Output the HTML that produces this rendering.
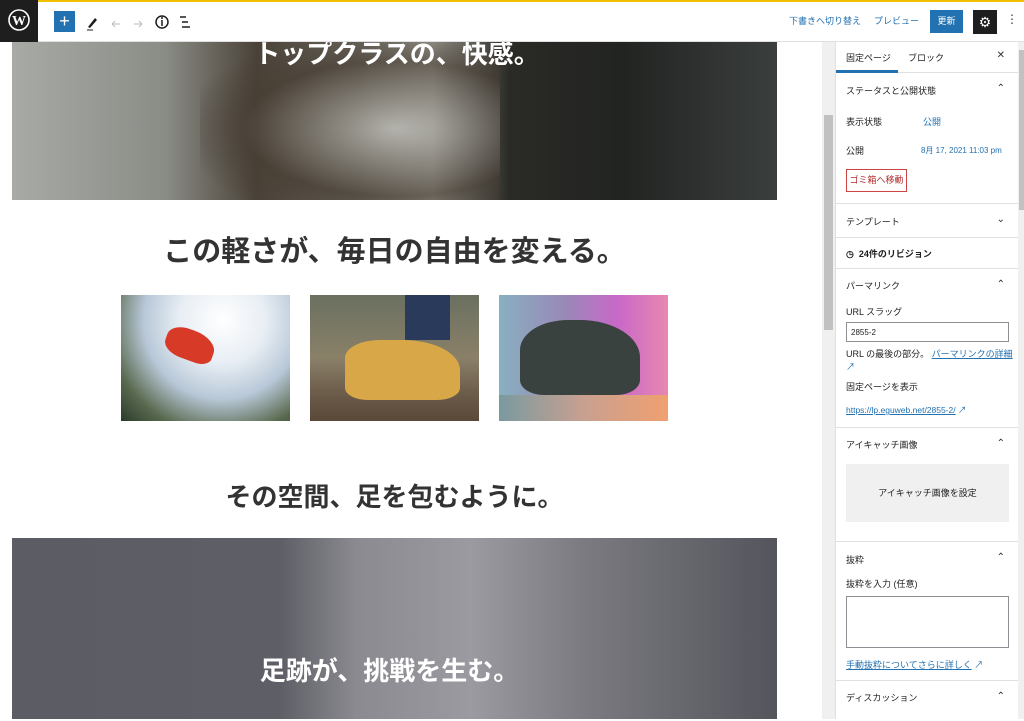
<!DOCTYPE html>
<html><head><meta charset="utf-8"><style>
*{box-sizing:border-box;margin:0;padding:0}
body{width:1024px;height:719px;overflow:hidden;background:#fff;font-family:"Liberation Sans","Noto Sans CJK JP",sans-serif;position:relative;color:#1e1e1e}
.abs{position:absolute}
.top{left:0;top:0;width:1024px;height:42px;background:#fff;border-top:2px solid #f0c000;border-bottom:1px solid #e0e0e0}
.wp{left:0;top:0;width:38px;height:42px;background:#1e1e1e}
.h{font-weight:bold;text-align:center;font-size:28px;color:#333}
.side{left:835px;top:42px;width:183px;height:677px;background:#fff;border-left:1px solid #e0e0e0;font-size:9px}
.sec{border-bottom:1px solid #e0e0e0;position:absolute;left:0;width:183px}
.t{position:absolute;left:10px}
.chev{position:absolute;right:14px;font-size:10px;color:#333}
a,.lnk{color:#2271b1}
</style></head><body>
<div class="abs" style="left:12px;top:42px;width:765px;height:158px;background:linear-gradient(90deg,#a8aaa6 0%,#8a8c86 20%,#4a4238 32%,#6a665c 45%,#9a9890 55%,#2a2a26 65%,#222422 80%,#3a3e3c 100%)"></div>
<div class="abs" style="left:200px;top:42px;width:300px;height:158px;background:radial-gradient(ellipse at 65% 55%,rgba(200,200,195,.7),rgba(70,60,50,.6) 55%,transparent 80%)"></div>
<div class="abs h" style="left:12px;top:34px;width:770px;color:#fff;font-size:26px">トップクラスの、快感。</div>
<div class="abs h" style="left:12px;top:228px;width:765px;font-size:29px">この軽さが、毎日の自由を変える。</div>
<div class="abs" style="left:121px;top:295px;width:169px;height:126px;background:radial-gradient(circle at 60% 20%,#fff,#e8eef4 30%,#b8c8d8 55%,#5a6a50 80%,#2a3a2a)"></div>
<div class="abs" style="left:165px;top:330px;width:50px;height:30px;background:#d83a28;border-radius:40% 50% 30% 40%;transform:rotate(20deg)"></div>
<div class="abs" style="left:310px;top:295px;width:169px;height:126px;background:linear-gradient(180deg,#6a7060 0%,#8a8068 50%,#6a5a48 80%,#5a4838)"></div>
<div class="abs" style="left:345px;top:340px;width:115px;height:60px;background:#d8a848;border-radius:30% 50% 20% 20%"></div>
<div class="abs" style="left:405px;top:295px;width:45px;height:45px;background:#2a3a5a"></div>
<div class="abs" style="left:499px;top:295px;width:169px;height:126px;background:linear-gradient(90deg,#88b0c0,#9a88b8 40%,#c868c8 70%,#e888b0)"></div>
<div class="abs" style="left:520px;top:320px;width:120px;height:75px;background:#3a4240;border-radius:40% 50% 20% 20%"></div>
<div class="abs" style="left:499px;top:395px;width:169px;height:26px;background:linear-gradient(90deg,#7a9aa0,#c8a090,#f0a070)"></div>
<div class="abs h" style="left:12px;top:477px;width:765px;font-size:26px">その空間、足を包むように。</div>
<div class="abs" style="left:12px;top:538px;width:765px;height:181px;background:linear-gradient(90deg,#5c5c64 0%,#5e5e66 35%,#8a8a90 45%,#9a9aa0 60%,#7a7a80 75%,#54545c 100%)"></div>
<div class="abs h" style="left:12px;top:651px;width:755px;color:#fff;font-size:26px">足跡が、挑戦を生む。</div>
<div class="abs" style="left:822px;top:42px;width:13px;height:677px;background:#f0f0f0"></div>
<div class="abs" style="left:824px;top:115px;width:9px;height:215px;background:#c1c1c1"></div>
<div class="abs top"></div>
<div class="abs wp"><svg width="38" height="42" viewBox="0 0 38 42"><circle cx="19" cy="20" r="10" fill="none" stroke="#fff" stroke-width="1.6"/><text x="19" y="25" font-size="14" font-weight="bold" fill="#fff" text-anchor="middle" font-family="Liberation Serif">W</text></svg></div>
<div class="abs" style="left:54px;top:11px;width:21px;height:21px;background:#2271b1;color:#fff;font-size:18px;line-height:20px;text-align:center">+</div>
<svg class="abs" style="left:84px;top:12px" width="120" height="20"><path d="M4 15 L11 6 L13 8 L6 16 Z" fill="#1e1e1e"/><line x1="3" y1="18" x2="9" y2="18" stroke="#1e1e1e"/><path d="M28 12 h8 M28 12 l3 -3 M28 12 l3 3" stroke="#bbb" fill="none"/><path d="M58 12 h-8 M58 12 l-3 -3 M58 12 l-3 3" stroke="#bbb" fill="none"/><circle cx="78" cy="10" r="6" fill="none" stroke="#1e1e1e" stroke-width="1.5"/><line x1="78" y1="8" x2="78" y2="14" stroke="#1e1e1e" stroke-width="1.5"/><circle cx="78" cy="6" r="1" fill="#1e1e1e"/><path d="M96 5h6M98 10h6M98 15h8" stroke="#1e1e1e" stroke-width="1.5"/></svg>
<div class="abs lnk" style="left:789px;top:14px;font-size:9px">下書きへ切り替え</div>
<div class="abs lnk" style="left:874px;top:14px;font-size:9px">プレビュー</div>
<div class="abs" style="left:930px;top:10px;width:33px;height:23px;background:#2271b1;color:#fff;font-size:9px;line-height:23px;text-align:center">更新</div>
<div class="abs" style="left:973px;top:10px;width:24px;height:24px;background:#1e1e1e;color:#fff;font-size:14px;line-height:24px;text-align:center">⚙</div>
<div class="abs" style="left:1006px;top:12px;font-size:12px;color:#333">⋮</div>
<div class="abs side">
 <div class="sec" style="top:0;height:31px"><span class="t" style="top:9px">固定ページ</span><span class="t" style="left:72px;top:9px">ブロック</span><span class="chev" style="top:8px">✕</span><div class="abs" style="left:0;top:28px;width:62px;height:3px;background:#2271b1"></div></div>
 <div class="sec" style="top:31px;height:131px"><span class="t" style="top:11px">ステータスと公開状態</span><span class="chev" style="top:10px">⌃</span>
  <span class="t" style="top:42px">表示状態</span><span class="t lnk" style="left:87px;top:42px">公開</span>
  <span class="t" style="top:71px">公開</span><span class="t lnk" style="left:85px;top:72px;font-size:8px">8月 17, 2021 11:03 pm</span>
  <div class="abs" style="left:10px;top:96px;width:61px;height:23px;border:1px solid #c44;color:#b32d2e;font-size:9px;line-height:21px;text-align:center">ゴミ箱へ移動</div></div>
 <div class="sec" style="top:162px;height:34px"><span class="t" style="top:11px">テンプレート</span><span class="chev" style="top:10px">⌄</span></div>
 <div class="sec" style="top:196px;height:31px"><span class="t" style="top:9px;font-weight:bold">◷ &nbsp;24件のリビジョン</span></div>
 <div class="sec" style="top:227px;height:159px"><span class="t" style="top:10px">パーマリンク</span><span class="chev" style="top:10px">⌃</span>
  <span class="t" style="top:36px">URL スラッグ</span>
  <div class="abs" style="left:10px;top:53px;width:163px;height:20px;border:1px solid #8c8f94;font-size:8px;padding:5px 4px">2855-2</div>
  <span class="t" style="top:79px;width:170px;line-height:13px">URL の最後の部分。 <u class="lnk">パーマリンクの詳細</u> <span class="lnk">↗</span></span>
  <span class="t" style="top:111px">固定ページを表示</span>
  <span class="t lnk" style="top:135px;font-size:8.5px"><u>https://lp.eguweb.net/2855-2/</u> ↗</span></div>
 <div class="sec" style="top:386px;height:114px"><span class="t" style="top:10px">アイキャッチ画像</span><span class="chev" style="top:10px">⌃</span>
  <div class="abs" style="left:10px;top:36px;width:163px;height:58px;background:#f0f0f0;text-align:center;line-height:58px">アイキャッチ画像を設定</div></div>
 <div class="sec" style="top:500px;height:139px"><span class="t" style="top:11px">抜粋</span><span class="chev" style="top:10px">⌃</span>
  <span class="t" style="top:35px">抜粋を入力 (任意)</span>
  <div class="abs" style="left:10px;top:54px;width:163px;height:52px;border:1px solid #8c8f94"></div>
  <span class="t lnk" style="top:116px"><u>手動抜粋についてさらに詳しく</u> ↗</span></div>
 <div class="sec" style="top:639px;height:40px;border:none"><span class="t" style="top:10px">ディスカッション</span><span class="chev" style="top:10px">⌃</span></div>
</div>
<div class="abs" style="left:1018px;top:42px;width:6px;height:677px;background:#f0f0f0"></div>
<div class="abs" style="left:1019px;top:50px;width:5px;height:160px;background:#c1c1c1"></div>
</body></html>
